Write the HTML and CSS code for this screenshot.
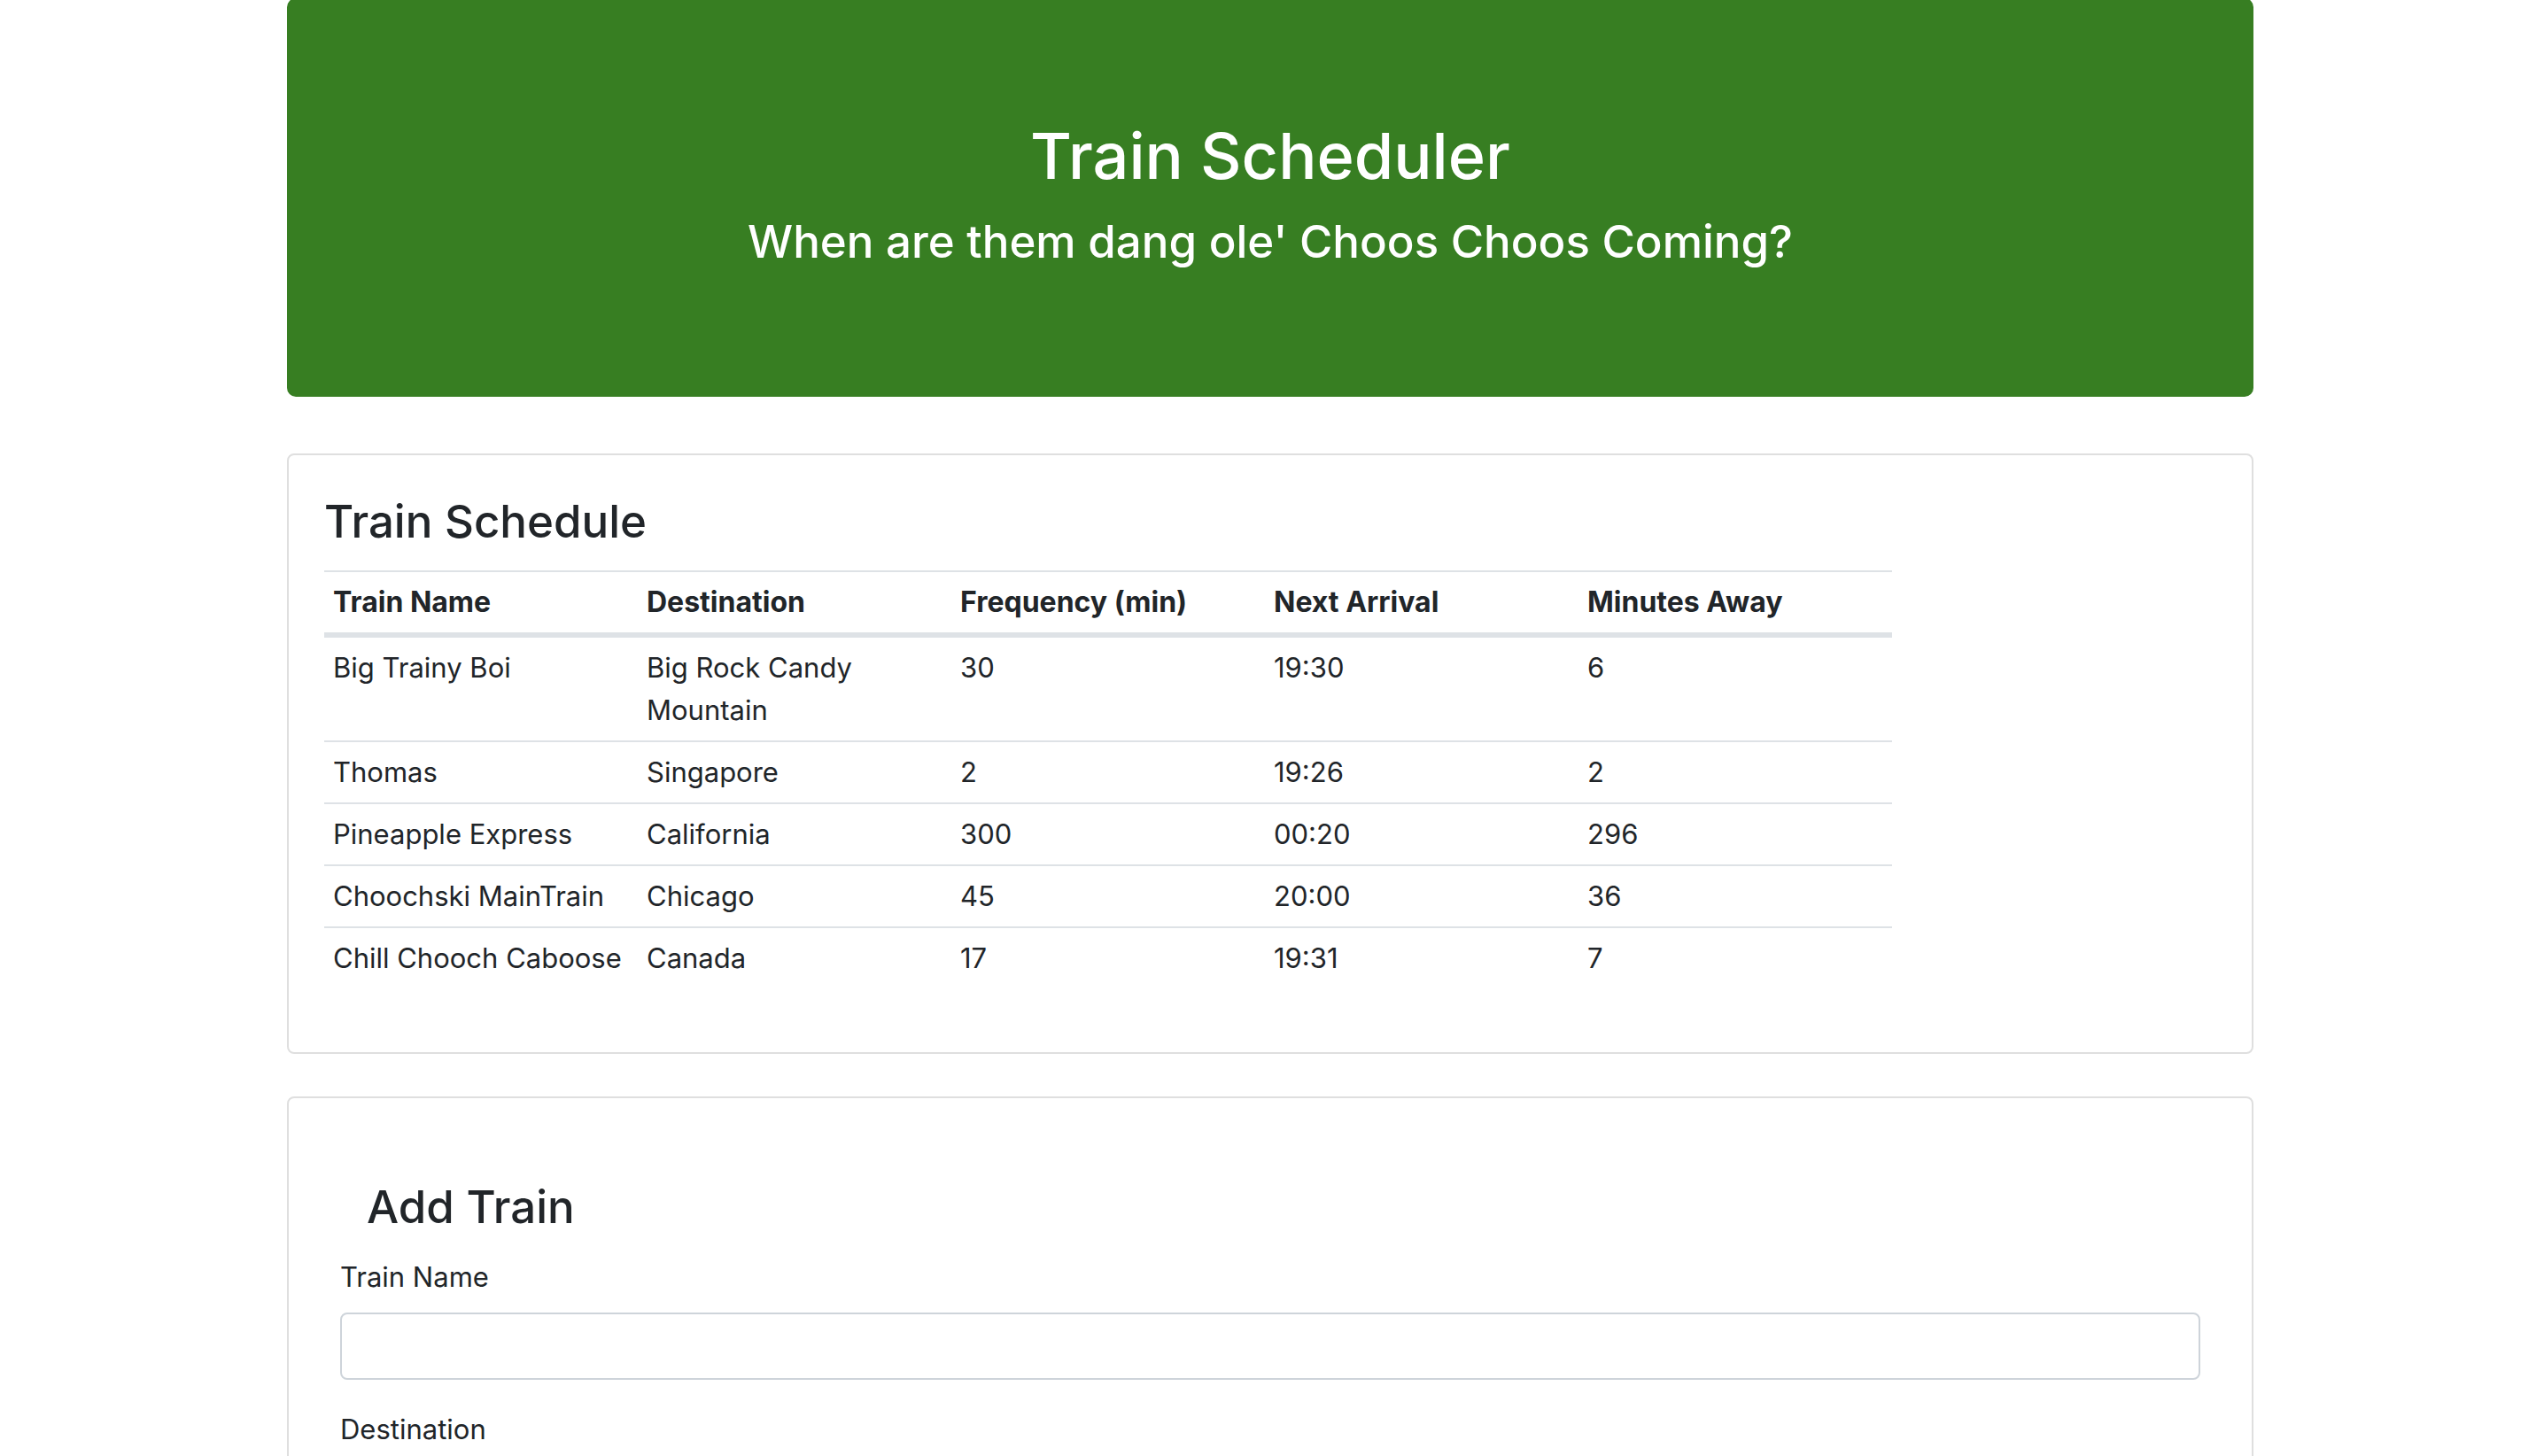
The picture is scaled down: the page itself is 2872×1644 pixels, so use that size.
FILE: index.html
```html
<!DOCTYPE html>
<html lang="en">
<head>
<meta charset="utf-8">
<meta name="viewport" content="width=device-width, initial-scale=1">
<title>Train Scheduler</title>
<link rel="stylesheet" href="styles.css">
</head>
<body>
<main class="container">
  <header class="jumbotron">
    <h1 class="jumbotron-title">Train Scheduler</h1>
    <h2 class="heading">When are them dang ole' Choos Choos Coming?</h2>
  </header>

  <section class="card">
    <h2 class="heading card-title">Train Schedule</h2>
    <table class="table">
      <thead>
        <tr>
          <th scope="col">Train Name</th>
          <th scope="col">Destination</th>
          <th scope="col">Frequency (min)</th>
          <th scope="col">Next Arrival</th>
          <th scope="col">Minutes Away</th>
        </tr>
      </thead>
      <tbody>
        <tr><td>Big Trainy Boi</td><td>Big Rock Candy Mountain</td><td>30</td><td>19:30</td><td>6</td></tr>
        <tr><td>Thomas</td><td>Singapore</td><td>2</td><td>19:26</td><td>2</td></tr>
        <tr><td>Pineapple Express</td><td>California</td><td>300</td><td>00:20</td><td>296</td></tr>
        <tr><td>Choochski MainTrain</td><td>Chicago</td><td>45</td><td>20:00</td><td>36</td></tr>
        <tr><td>Chill Chooch Caboose</td><td>Canada</td><td>17</td><td>19:31</td><td>7</td></tr>
      </tbody>
    </table>
  </section>

  <section class="card card-form">
    <h2 class="heading card-title form-title">Add Train</h2>
    <form>
      <div class="form-group">
        <label for="train-name">Train Name</label>
        <input class="form-control" id="train-name" type="text">
      </div>
      <div class="form-group">
        <label for="destination">Destination</label>
        <input class="form-control" id="destination" type="text">
      </div>
    </form>
  </section>
</main>
</body>
</html>
```
FILE: styles.css
```css
*,
*::before,
*::after {
  box-sizing: border-box;
}

body {
  margin: 0;
  padding-right: 4px;
  height: 100vh;
  overflow: hidden;
  background: #fff;
  color: #212529;
  font-family: Inter, "Liberation Sans", sans-serif;
  font-size: 31px;
  line-height: 48px;
}

.container {
  max-width: 2220px;
  margin: -2px auto 0;
}

.jumbotron {
  margin-bottom: 64px;
  padding: 128px 64px;
  border-radius: 10px;
  background: #377e22;
  color: #fff;
  text-align: center;
}

.jumbotron-title {
  margin: 0 0 12px;
  font-size: 72px;
  font-weight: 500;
  line-height: 100px;
}

.heading {
  margin: 0 0 12px;
  font-size: 51px;
  font-weight: 500;
  line-height: 70px;
}

.card {
  margin-bottom: 48px;
  padding: 40px;
  border: 2px solid #dfdfdf;
  border-radius: 8px;
}

.card-title {
  margin-bottom: 20px;
}

.table {
  width: 100%;
  max-width: 1770px;
  margin-bottom: 32px;
  border-spacing: 0;
  table-layout: fixed;
}

.table th,
.table td {
  padding: 10px;
  border-top: 2px solid #dee2e6;
  text-align: left;
  vertical-align: top;
}

.table th {
  border-bottom: 4px solid #dee2e6;
  font-size: 32px;
  font-weight: 700;
}

.card-form {
  padding: 88px 58px;
}

.form-title {
  padding-left: 30px;
}

.form-group {
  margin-bottom: 32px;
}

.form-group label {
  display: block;
  margin-bottom: 16px;
}

.form-control {
  display: block;
  width: 100%;
  height: 76px;
  padding: 12px 24px;
  border: 2px solid #ced4da;
  border-radius: 8px;
  background: #fff;
  color: #495057;
  font: inherit;
}
```
